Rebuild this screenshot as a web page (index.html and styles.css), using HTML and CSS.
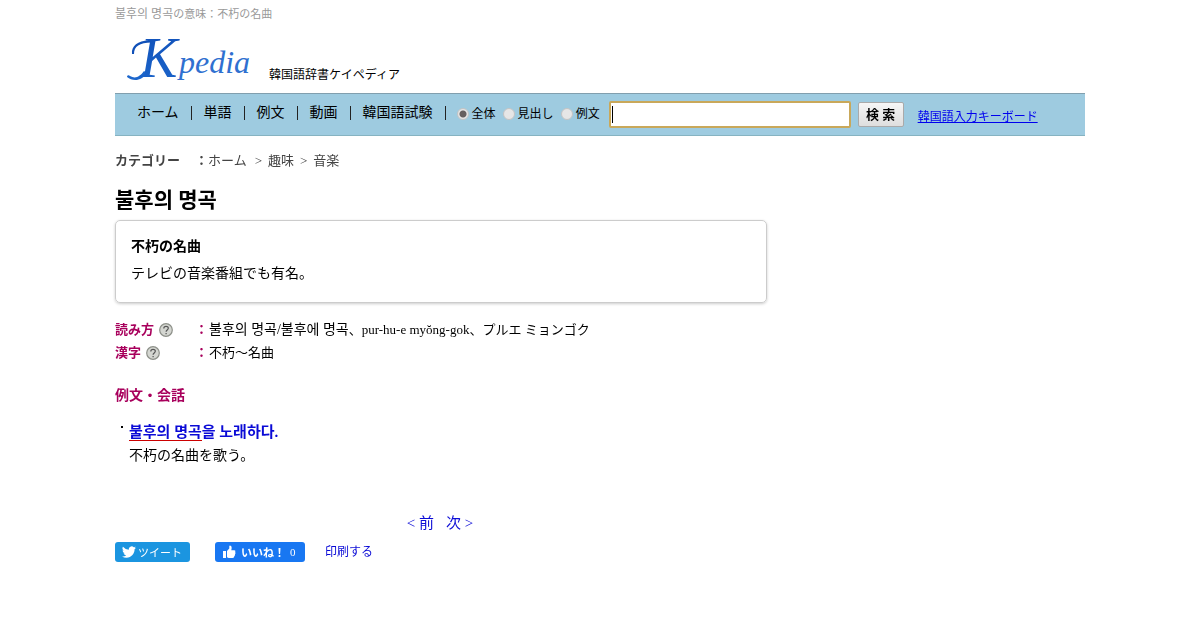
FILE: index.html
```html
<!DOCTYPE html>
<html lang="ja">
<head>
  <meta charset="UTF-8">
  <meta name="viewport" content="width=device-width, initial-scale=1.0">
  <title>불후의 명곡の意味：不朽の名曲</title>
  <link rel="stylesheet" href="styles.css">
</head>
<body>
  <div class="wrapper">
    <header>
      <p class="tagline"><span lang="ko">불후의 명곡</span>の意味：不朽の名曲</p>
      <div class="brand">
        <a class="logo" href="#">
          <svg width="140" height="52" viewBox="0 0 140 52" role="img" aria-label="Kpedia">
            <defs>
              <linearGradient id="logo-blue" x1="0" y1="0" x2="0" y2="1">
                <stop offset="0" stop-color="#1050b8"/>
                <stop offset="1" stop-color="#1c66cc"/>
              </linearGradient>
            </defs>
            <!-- swashes at the head and foot of the K -->
            <path d="M34 8C20 6 11 12 12 21L14 21C14 13 20 9 34 9.500Z" fill="#1050b8"/>
            <path d="M27 40C22 48 13 49 7 44C7 42 9 42 10 43C15 46 20 44 24 38Z" fill="#1c66cc"/>
            <text class="logo-k" x="20" y="44" fill="url(#logo-blue)">K</text>
            <text class="logo-rest" x="59" y="40" fill="#2f70d0">pedia</text>
          </svg>
        </a>
        <span class="site-name">韓国語辞書ケイペディア</span>
      </div>
    </header>

    <div class="navbar">
      <nav>
        <a href="#">ホーム</a>
        <a href="#">単語</a>
        <a href="#">例文</a>
        <a href="#">動画</a>
        <a href="#">韓国語試験</a>
      </nav>
      <form class="search">
        <div class="scope">
          <label><input type="radio" name="scope" checked>全体</label>
          <label><input type="radio" name="scope">見出し</label>
          <label><input type="radio" name="scope">例文</label>
        </div>
        <input class="keyword" type="text" name="nq" aria-label="検索" autofocus>
        <button type="submit">検 索</button>
      </form>
      <a class="keyboard" href="#">韓国語入力キーボード</a>
    </div>

    <main>
      <div class="row category">
        <strong class="term">カテゴリー</strong><b class="colon">：</b>
        <div class="crumbs"><a class="home" href="#">ホーム</a><span>&gt;</span><a href="#">趣味</a><span>&gt;</span><a href="#">音楽</a></div>
      </div>

      <h1 lang="ko">불후의 명곡</h1>

      <div class="meaning">
        <strong>不朽の名曲</strong>
        <p>テレビの音楽番組でも有名。</p>
      </div>

      <div class="row detail">
        <strong class="term">読み方 <svg class="help" viewBox="0 0 14 14"><circle cx="7" cy="7" r="6.3"/><path d="M4.8 5.4C4.8 2.7 9.3 2.7 9.3 5.3C9.3 7 7.1 6.9 7.1 8.7M7.1 10V11.3"/></svg></strong><b class="colon">：</b>
        <div><span lang="ko">불후의 명곡/불후에 명곡</span>、pur-hu-e myŏng-gok、プルエ ミョンゴク</div>
      </div>
      <div class="row detail">
        <strong class="term">漢字 <svg class="help" viewBox="0 0 14 14"><circle cx="7" cy="7" r="6.3"/><path d="M4.8 5.4C4.8 2.7 9.3 2.7 9.3 5.3C9.3 7 7.1 6.9 7.1 8.7M7.1 10V11.3"/></svg></strong><b class="colon">：</b>
        <div>不朽～名曲</div>
      </div>

      <h2>例文・会話</h2>
      <ul class="examples">
        <li>
          <a href="#" lang="ko"><span class="hit">불후의 명곡</span>을 노래하다.</a>
          <p>不朽の名曲を歌う。</p>
        </li>
      </ul>

      <div class="pager">
        <a href="#">&lt; 前</a>
        <a href="#">次 &gt;</a>
      </div>

      <div class="share">
        <button class="tweet" type="button">
          <svg width="14" height="14" viewBox="0 0 24 24"><path fill="#fff" d="M23.95 4.57a10 10 0 0 1-2.82.77 4.96 4.96 0 0 0 2.16-2.72 10 10 0 0 1-3.13 1.18 4.92 4.92 0 0 0-8.38 4.48A14 14 0 0 1 1.64 3.16a4.92 4.92 0 0 0 1.52 6.57 4.9 4.9 0 0 1-2.23-.61v.06a4.92 4.92 0 0 0 3.95 4.83 5 5 0 0 1-2.21.08 4.94 4.94 0 0 0 4.6 3.42A9.87 9.87 0 0 1 0 19.54a14 14 0 0 0 7.55 2.21c9.05 0 14-7.5 14-13.98l-.02-.64a10 10 0 0 0 2.42-2.56z"/></svg>ツイート
        </button>
        <button class="like" type="button">
          <svg width="14" height="14" viewBox="0 0 14 14"><path fill="#fff" d="M1 6H4V13H1ZM5 6L7.300 3.500V1Q7.500.2 8.600.7Q10.300 1.600 9.300 5.200H12.400Q14 5.500 13.200 7Q14 8.200 13 9.200Q13.400 10.400 12.400 11Q12.400 13 10.500 13H7Q5.500 13 5 12Z"/></svg><b>いいね！</b> 0
        </button>
        <a href="#">印刷する</a>
      </div>
    </main>
  </div>
</body>
</html>
```

FILE: styles.css
```css
* {
  box-sizing: border-box;
}

body {
  margin: 0;
  background: #fff;
  color: #000;
  font: 13px/20px "Liberation Serif", "Noto Sans CJK JP", serif;
}

p, h1, h2, ul {
  margin: 0;
  padding: 0;
}

a {
  color: #0a0ad6;
  text-decoration: none;
}

button, input {
  font-family: inherit;
}

.wrapper {
  max-width: 970px;
  margin: 0 auto;
  padding-top: 4px;
}

[lang="ko"] {
  font-family: "Liberation Serif", "Noto Sans CJK KR", serif;
}

/* header */
.tagline {
  font-size: 11px;
  color: #999;
}

.tagline [lang="ko"] {
  font-size: 12px;
}

.brand {
  display: flex;
  align-items: flex-end;
  gap: 9px;
  height: 69px;
  padding: 0 0 8px 5px;
}

.logo svg {
  display: block;
  overflow: visible;
}

.logo-k {
  font: italic 56px "Liberation Serif", serif;
}

.logo-rest {
  font: italic 32px "Liberation Serif", serif;
}

.site-name {
  font-size: 12px;
}

/* navigation and search */
.navbar {
  display: flex;
  align-items: center;
  height: 43px;
  padding-left: 10px;
  background: #9ecbe0;
  border-top: 1px solid #819fae;
  border-bottom: 1px solid #86b3c1;
}

nav {
  display: flex;
  padding-bottom: 4px;
}

nav a {
  padding: 0 12px;
  border-right: 1px solid #222;
  color: #000;
  font-size: 14px;
  line-height: 14px;
}

.search, .scope {
  display: flex;
  align-items: center;
}

.scope {
  gap: 7px;
  padding: 0 9px 2px 11px;
}

.scope label {
  display: flex;
  align-items: center;
  gap: 3px;
  font-size: 12px;
}

.scope input {
  appearance: none;
  width: 12px;
  height: 12px;
  margin: 0;
  border: 1px solid #c4c4c4;
  border-radius: 50%;
  background: #e6e6e6;
}

.scope input:checked {
  background: radial-gradient(circle, #665f5f 0 3px, #e6e6e6 4px);
}

.keyword {
  width: 242px;
  height: 27px;
  margin-right: 7px;
  padding: 1px;
  border: 2px solid #c9a85a;
  border-radius: 2px;
  outline: none;
  background: #fff linear-gradient(#000, #000) 1px center / 1px 17px no-repeat;
  caret-color: transparent;
  font-size: 16px;
}

.search button {
  width: 46px;
  height: 25px;
  padding: 0;
  border: 1px solid #aaa;
  border-radius: 2px;
  background: linear-gradient(#f6f6f6, #dedede);
  font-size: 13px;
  font-weight: bold;
  line-height: 20px;
}

.keyboard {
  margin: 4px 0 0 14px;
  color: #0000ee;
  font-size: 12px;
  text-decoration: underline;
}

/* entry */
.row {
  display: flex;
}

.term {
  width: 80px;
}

.category {
  margin-top: 15px;
  color: #444;
}

.category a {
  color: #444;
}

.crumbs span {
  margin: 0 6px;
}

.crumbs .home {
  margin-right: 2px;
}

h1 {
  margin-top: 16px;
  font-size: 21px;
  line-height: 26px;
}

.meaning {
  max-width: 652px;
  margin: 7px 0 15px;
  padding: 12px 15px 15px;
  border: 1px solid #ccc;
  border-radius: 5px;
  box-shadow: 0 1px 3px rgba(0, 0, 0, 0.2);
  font-size: 14px;
  line-height: 27px;
}

.detail {
  line-height: 23px;
}

.detail .term, .detail .colon, h2 {
  color: #a8005c;
}

.detail .colon {
  width: 14px;
}

.detail [lang="ko"] {
  font-size: 14px;
}

.help {
  width: 14px;
  height: 14px;
  margin-left: 2px;
  vertical-align: -3px;
  fill: #d4d6d1;
  stroke: #8d9089;
  stroke-width: 1.2;
}

.help path {
  fill: none;
  stroke: #555;
}

h2 {
  margin-top: 22px;
  font-size: 14px;
  line-height: 20px;
}

.examples {
  margin-top: 14px;
  list-style: none;
  font-size: 14px;
  line-height: 24px;
}

.examples li {
  position: relative;
  padding-left: 14px;
}

.examples li::before {
  content: "";
  position: absolute;
  top: 6px;
  left: 6px;
  width: 2px;
  height: 2px;
  background: #000;
}

.examples a {
  display: block;
  font-size: 15px;
  font-weight: bold;
}

.hit {
  border-bottom: 1px solid #c00;
}

.pager {
  display: flex;
  justify-content: center;
  gap: 12px;
  max-width: 650px;
  margin-top: 45px;
  font-size: 15px;
}

.share {
  display: flex;
  align-items: center;
  margin-top: 9px;
  font-size: 12px;
}

.share button {
  display: flex;
  align-items: center;
  height: 20px;
  padding: 0 7px;
  border: 0;
  border-radius: 3px;
  color: #fff;
  font-size: 11px;
}

.share .tweet {
  width: 75px;
  gap: 2px;
  margin-right: 25px;
  background: #1b95e0;
}

.share .like {
  width: 90px;
  gap: 5px;
  margin-right: 20px;
  background: #1877f2;
}
```
